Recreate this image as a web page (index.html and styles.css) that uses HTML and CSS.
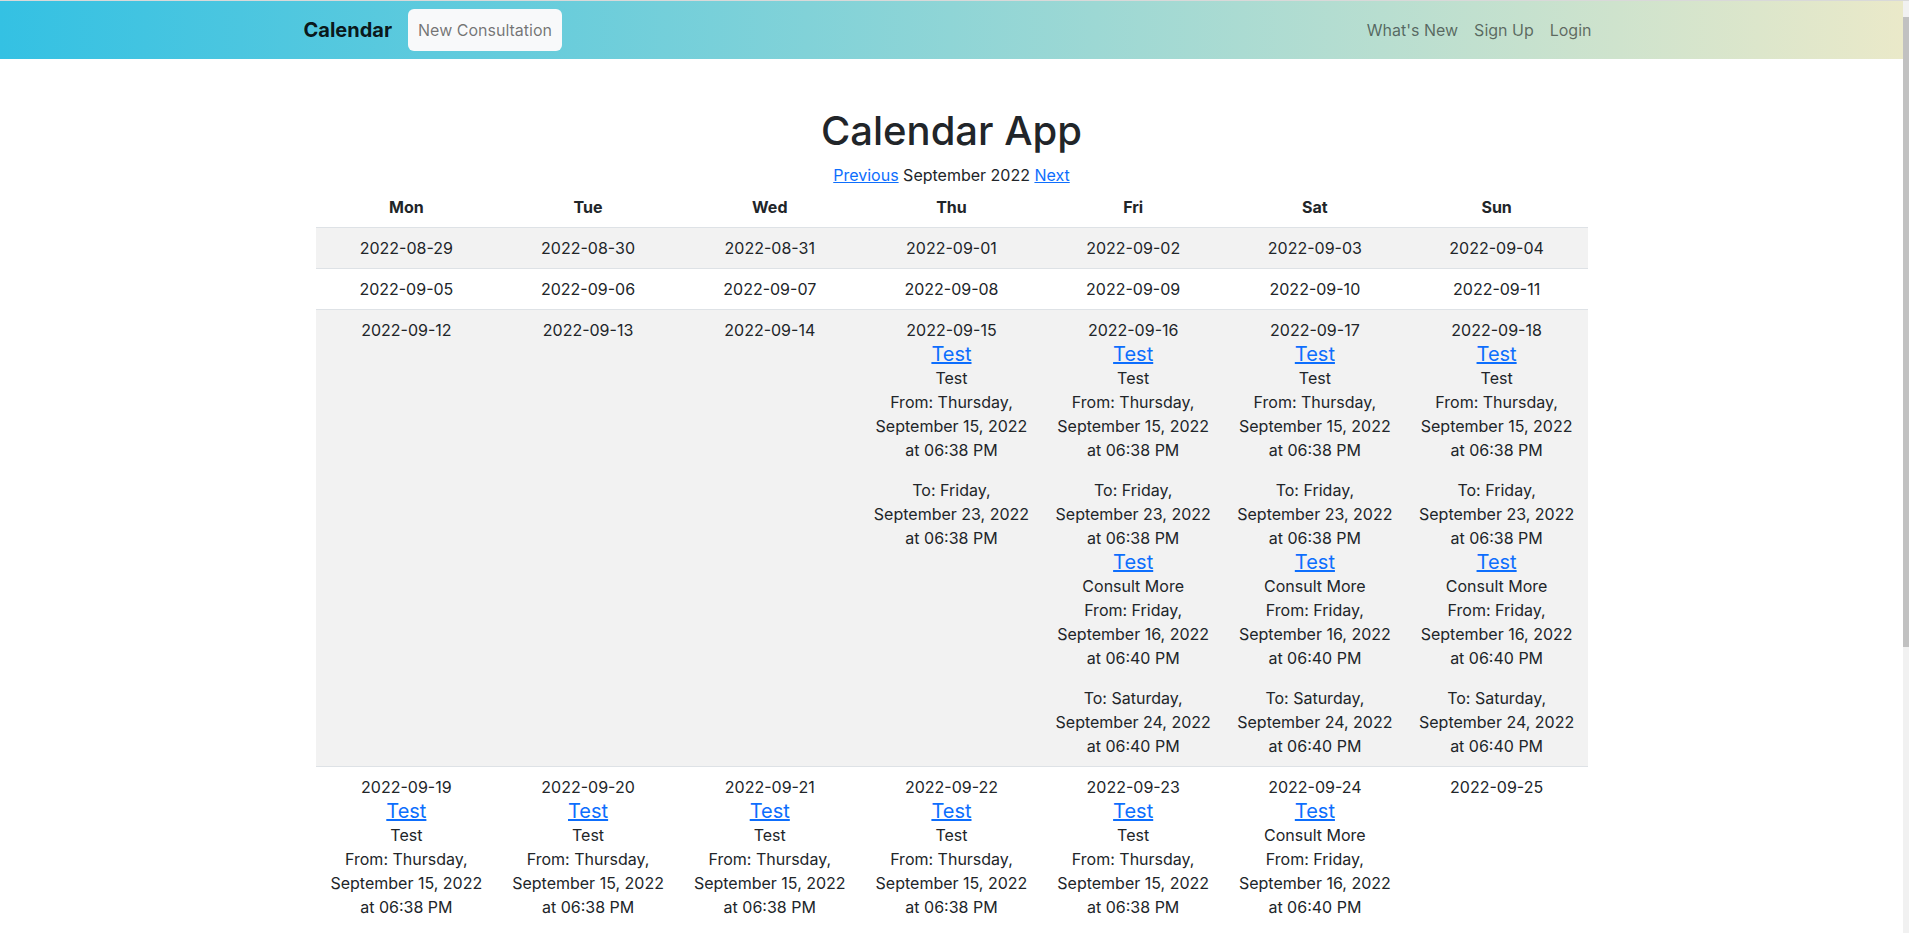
FILE: index.html
```html
<!DOCTYPE html>
<html lang="en">
<head>
<meta charset="utf-8">
<title>Calendar App</title>
<link rel="stylesheet" href="styles.css">
</head>
<body>
<div class="scrollbar" aria-hidden="true"><div class="scroll-thumb"></div></div>
<nav class="navbar">
  <div class="nav-inner">
    <a class="brand" href="#">Calendar</a>
    <a class="btn-new" href="#">New Consultation</a>
    <ul class="nav-right">
      <li><a href="#">What's New</a></li>
      <li><a href="#">Sign Up</a></li>
      <li><a href="#">Login</a></li>
    </ul>
  </div>
</nav>
<main class="container">
  <h1 class="title">Calendar App</h1>
  <p class="month-nav"><a href="#">Previous</a> September 2022 <a href="#">Next</a></p>
  <table class="cal">
    <thead>
      <tr><th>Mon</th><th>Tue</th><th>Wed</th><th>Thu</th><th>Fri</th><th>Sat</th><th>Sun</th></tr>
    </thead>
    <tbody>
      <tr class="striped">
        <td>2022-08-29</td><td>2022-08-30</td><td>2022-08-31</td><td>2022-09-01</td><td>2022-09-02</td><td>2022-09-03</td><td>2022-09-04</td>
      </tr>
      <tr>
        <td>2022-09-05</td><td>2022-09-06</td><td>2022-09-07</td><td>2022-09-08</td><td>2022-09-09</td><td>2022-09-10</td><td>2022-09-11</td>
      </tr>
      <tr class="striped">
        <td>2022-09-12</td>
        <td>2022-09-13</td>
        <td>2022-09-14</td>
        <td>2022-09-15
          <a class="ev-link" href="#">Test</a><div class="ev-desc">Test</div>
          <p class="ev-from">From: Thursday, September 15, 2022 at 06:38 PM</p>
          <p class="ev-to">To: Friday, September 23, 2022 at 06:38 PM</p>
        </td>
        <td>2022-09-16
          <a class="ev-link" href="#">Test</a><div class="ev-desc">Test</div>
          <p class="ev-from">From: Thursday, September 15, 2022 at 06:38 PM</p>
          <p class="ev-to">To: Friday, September 23, 2022 at 06:38 PM</p>
          <a class="ev-link" href="#">Test</a><div class="ev-desc">Consult More</div>
          <p class="ev-from">From: Friday, September 16, 2022 at 06:40 PM</p>
          <p class="ev-to">To: Saturday, September 24, 2022 at 06:40 PM</p>
        </td>
        <td>2022-09-17
          <a class="ev-link" href="#">Test</a><div class="ev-desc">Test</div>
          <p class="ev-from">From: Thursday, September 15, 2022 at 06:38 PM</p>
          <p class="ev-to">To: Friday, September 23, 2022 at 06:38 PM</p>
          <a class="ev-link" href="#">Test</a><div class="ev-desc">Consult More</div>
          <p class="ev-from">From: Friday, September 16, 2022 at 06:40 PM</p>
          <p class="ev-to">To: Saturday, September 24, 2022 at 06:40 PM</p>
        </td>
        <td>2022-09-18
          <a class="ev-link" href="#">Test</a><div class="ev-desc">Test</div>
          <p class="ev-from">From: Thursday, September 15, 2022 at 06:38 PM</p>
          <p class="ev-to">To: Friday, September 23, 2022 at 06:38 PM</p>
          <a class="ev-link" href="#">Test</a><div class="ev-desc">Consult More</div>
          <p class="ev-from">From: Friday, September 16, 2022 at 06:40 PM</p>
          <p class="ev-to">To: Saturday, September 24, 2022 at 06:40 PM</p>
        </td>
      </tr>
      <tr>
        <td>2022-09-19
          <a class="ev-link" href="#">Test</a><div class="ev-desc">Test</div>
          <p class="ev-from">From: Thursday, September 15, 2022 at 06:38 PM</p>
          <p class="ev-to">To: Friday, September 23, 2022 at 06:38 PM</p>
          <a class="ev-link" href="#">Test</a><div class="ev-desc">Consult More</div>
          <p class="ev-from">From: Friday, September 16, 2022 at 06:40 PM</p>
          <p class="ev-to">To: Saturday, September 24, 2022 at 06:40 PM</p>
        </td>
        <td>2022-09-20
          <a class="ev-link" href="#">Test</a><div class="ev-desc">Test</div>
          <p class="ev-from">From: Thursday, September 15, 2022 at 06:38 PM</p>
          <p class="ev-to">To: Friday, September 23, 2022 at 06:38 PM</p>
          <a class="ev-link" href="#">Test</a><div class="ev-desc">Consult More</div>
          <p class="ev-from">From: Friday, September 16, 2022 at 06:40 PM</p>
          <p class="ev-to">To: Saturday, September 24, 2022 at 06:40 PM</p>
        </td>
        <td>2022-09-21
          <a class="ev-link" href="#">Test</a><div class="ev-desc">Test</div>
          <p class="ev-from">From: Thursday, September 15, 2022 at 06:38 PM</p>
          <p class="ev-to">To: Friday, September 23, 2022 at 06:38 PM</p>
          <a class="ev-link" href="#">Test</a><div class="ev-desc">Consult More</div>
          <p class="ev-from">From: Friday, September 16, 2022 at 06:40 PM</p>
          <p class="ev-to">To: Saturday, September 24, 2022 at 06:40 PM</p>
        </td>
        <td>2022-09-22
          <a class="ev-link" href="#">Test</a><div class="ev-desc">Test</div>
          <p class="ev-from">From: Thursday, September 15, 2022 at 06:38 PM</p>
          <p class="ev-to">To: Friday, September 23, 2022 at 06:38 PM</p>
          <a class="ev-link" href="#">Test</a><div class="ev-desc">Consult More</div>
          <p class="ev-from">From: Friday, September 16, 2022 at 06:40 PM</p>
          <p class="ev-to">To: Saturday, September 24, 2022 at 06:40 PM</p>
        </td>
        <td>2022-09-23
          <a class="ev-link" href="#">Test</a><div class="ev-desc">Test</div>
          <p class="ev-from">From: Thursday, September 15, 2022 at 06:38 PM</p>
          <p class="ev-to">To: Friday, September 23, 2022 at 06:38 PM</p>
          <a class="ev-link" href="#">Test</a><div class="ev-desc">Consult More</div>
          <p class="ev-from">From: Friday, September 16, 2022 at 06:40 PM</p>
          <p class="ev-to">To: Saturday, September 24, 2022 at 06:40 PM</p>
        </td>
        <td>2022-09-24
          <a class="ev-link" href="#">Test</a><div class="ev-desc">Consult More</div>
          <p class="ev-from">From: Friday, September 16, 2022 at 06:40 PM</p>
          <p class="ev-to">To: Saturday, September 24, 2022 at 06:40 PM</p>
        </td>
        <td>2022-09-25</td>
      </tr>
      <tr class="striped">
        <td>2022-09-26</td><td>2022-09-27</td><td>2022-09-28</td><td>2022-09-29</td><td>2022-09-30</td><td>2022-10-01</td><td>2022-10-02</td>
      </tr>
    </tbody>
  </table>
</main>
</body>
</html>
```
FILE: styles.css
```css
* {
  box-sizing: border-box;
}
body {
  margin: 0;
  padding-right: 6px;
  border-top: 1px solid #d9d9d9;
  font-family: Inter, "Liberation Sans", sans-serif;
  font-size: 16px;
  line-height: 1.5;
  color: #212529;
  background: #fff;
}
a {
  color: #0d6efd;
}
.scrollbar {
  position: fixed;
  top: 0;
  right: 0;
  width: 6px;
  height: 100%;
  background: #f1f1f1;
  border-top: 1px solid #d9d9d9;
  padding-top: 16px;
}
.scroll-thumb {
  width: 100%;
  height: 630px;
  background: #c1c1c1;
}
.navbar {
  background: linear-gradient(to right, #34c1e3, #eae9c9);
  padding: 8px 0 8px;
}
.nav-inner {
  max-width: 1320px;
  margin: 0 auto;
  padding: 0 12px;
  display: flex;
  align-items: center;
}
.brand {
  font-size: 20px;
  line-height: 30px;
  font-weight: 700;
  color: rgba(0, 0, 0, 0.9);
  text-decoration: none;
  margin-right: 16px;
}
.btn-new {
  display: block;
  background: #f8f9fa;
  color: rgba(0, 0, 0, 0.55);
  text-decoration: none;
  padding: 9px 10px;
  line-height: 24px;
  border-radius: 6px;
}
.nav-right {
  list-style: none;
  margin: 0 0 0 auto;
  padding: 0;
  display: flex;
}
.nav-right a {
  display: block;
  padding: 8px;
  color: rgba(0, 0, 0, 0.55);
  text-decoration: none;
}
.container {
  width: 1272px;
  margin: 48px auto 0;
}
.title {
  font-size: 40px;
  font-weight: 500;
  line-height: 1.2;
  text-align: center;
  margin: 0 0 8px;
}
.month-nav {
  text-align: center;
  margin: 0;
}
.cal {
  width: 100%;
  table-layout: fixed;
  border-collapse: collapse;
}
.cal th,
.cal td {
  padding: 8px;
  text-align: center;
  vertical-align: top;
  border-bottom: 1px solid #dee2e6;
}
.cal th {
  font-weight: 700;
}
.cal tr.striped td {
  background: #f2f2f2;
}
.ev-link {
  display: block;
  font-size: 20px;
  line-height: 24px;
}
.ev-desc {
  line-height: 24px;
}
.ev-from {
  margin: 0 0 16px;
}
.ev-to {
  margin: 0;
}
```
